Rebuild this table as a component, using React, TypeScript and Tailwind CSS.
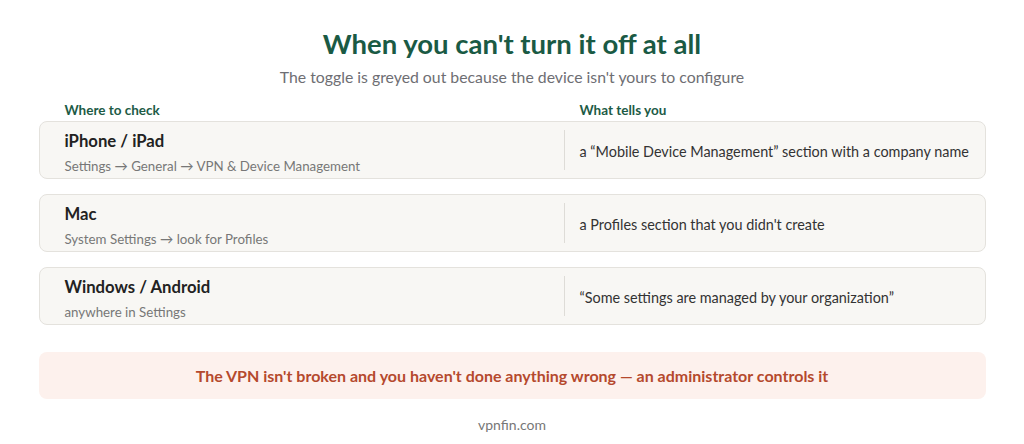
const rows = [
  {
    title: "iPhone / iPad",
    path: "Settings → General → VPN & Device Management",
    tell: "a “Mobile Device Management” section with a company name",
  },
  {
    title: "Mac",
    path: "System Settings → look for Profiles",
    tell: "a Profiles section that you didn't create",
  },
  {
    title: "Windows / Android",
    path: "anywhere in Settings",
    tell: "“Some settings are managed by your organization”",
  },
];

export default function App() {
  return (
    <div
      className="h-[444px] w-full bg-white pt-[28px]"
      style={{ fontFamily: "Lato, 'Open Sans', sans-serif" }}
    >
      <h1 className="text-center text-[27.5px] leading-[32px] font-bold text-[#1a5a44]">
        When you can't turn it off at all
      </h1>
      <p className="mt-[7px] text-center text-[15.8px] leading-[20px] text-[#6e6e73]">
        The toggle is greyed out because the device isn't yours to configure
      </p>

      <div className="mx-auto mt-[15px] w-[947px]">
        <div className="flex text-[13.5px] leading-[16px] font-bold text-[#1d5b46]">
          <div className="w-[525px] pl-[26px]">Where to check</div>
          <div className="pl-[16px]">What tells you</div>
        </div>

        <div className="mt-[3px] flex flex-col gap-[15px]">
          {rows.map((row, i) => (
            <div
              key={i}
              className="flex h-[58px] items-center rounded-[8px] border border-[#e4e2dd] bg-[#f8f7f4]"
            >
              <div className="flex w-[524px] flex-col gap-[7px] pt-[4px] pl-[25px]">
                <span className="text-[16.7px] leading-[20px] font-bold text-[#222222]">
                  {row.title}
                </span>
                <span className="text-[13.3px] leading-[16px] text-[#777777]">
                  {row.path}
                </span>
              </div>
              <div className="h-[40px] w-px bg-[#dedcd7]" />
              <div className="pt-[4px] pl-[15px] text-[14.4px] leading-[18px] text-[#333333]">
                {row.tell}
              </div>
            </div>
          ))}
        </div>

        <div className="mt-[27px] flex h-[47px] items-center justify-center rounded-[8px] bg-[#fdf1ed] text-[16px] font-bold text-[#b5492d]">
          The VPN isn't broken and you haven't done anything wrong — an administrator controls it
        </div>
      </div>

      <p className="mt-[16px] text-center text-[14px] leading-[20px] text-[#777777]">
        vpnfin.com
      </p>
    </div>
  );
}
